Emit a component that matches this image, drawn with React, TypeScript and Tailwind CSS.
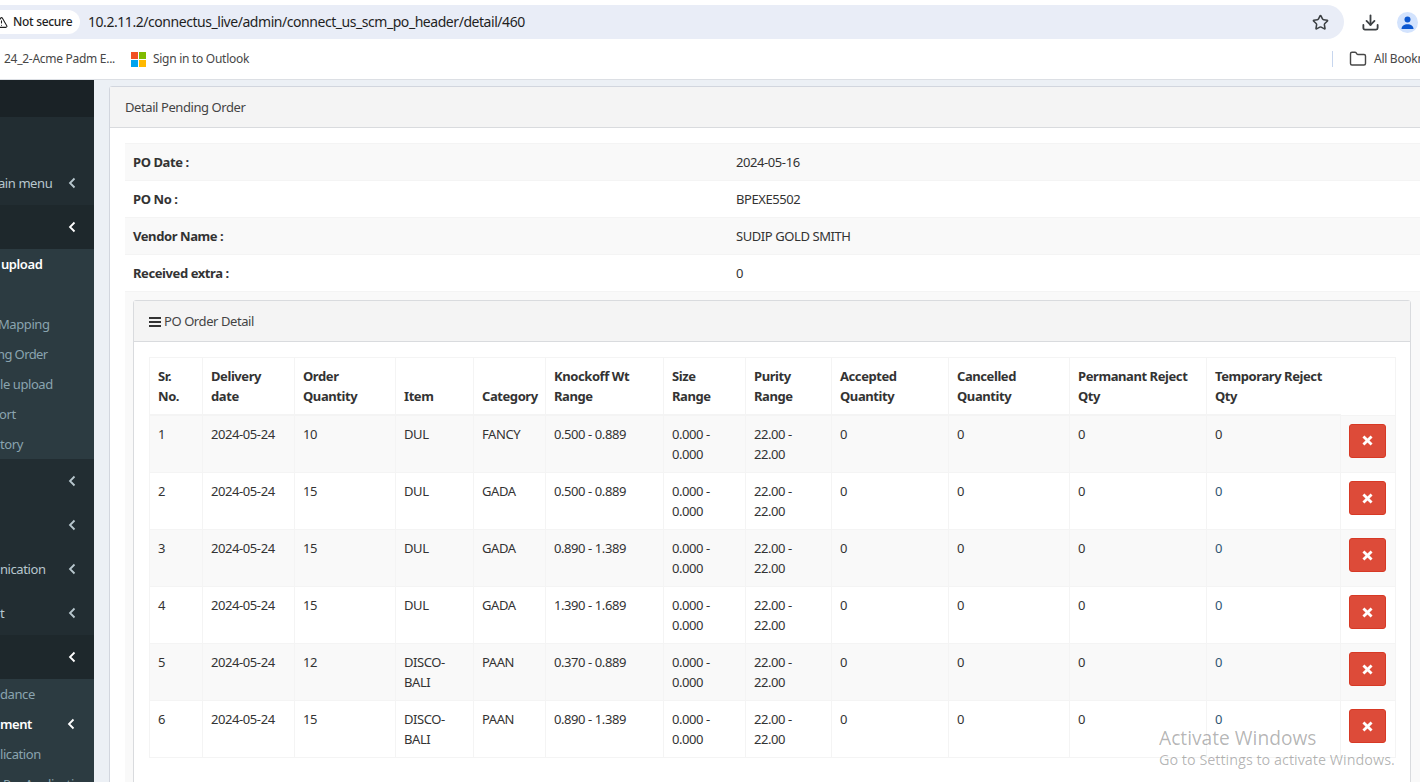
import React from "react";
import { Star, Download, Folder, TriangleAlert } from "lucide-react";

const Chevron = ({ color = "#b8c7ce" }: { color?: string }) => (
  <svg width="8" height="12" viewBox="0 0 8 12" fill="none" stroke={color} strokeWidth="1.8">
    <path d="M6.5 1.5 L2 6 L6.5 10.5" />
  </svg>
);

const Cross = () => (
  <svg width="11" height="11" viewBox="0 0 10 10" fill="#fff">
    <path d="M2.2.4 5 3.2 7.8.4 9.6 2.2 6.8 5l2.8 2.8-1.8 1.8L5 6.8 2.2 9.6.4 7.8 3.2 5 .4 2.2z" />
  </svg>
);

const MainItem = ({ text = "", active = false, shift = "" }: { text?: string; active?: boolean; shift?: string }) => (
  <div className={`h-[44px] flex items-center justify-between pr-[18px] text-[13px] ${active ? "bg-[#1e282c]" : ""} text-[#b8c7ce]`}>
    <span className={`whitespace-nowrap pt-[2px] ${shift}`}>{text}</span>
    <Chevron color={active ? "#ffffff" : "#b8c7ce"} />
  </div>
);

const SubItem = ({ text = "", white = false, chevron = false, shift = "" }: { text?: string; white?: boolean; chevron?: boolean; shift?: string }) => (
  <div className={`h-[30px] flex items-center justify-between pr-[19px] text-[13px] ${white ? "text-white font-semibold" : "text-[#8aa4af]"}`}>
    <span className={`whitespace-nowrap pt-[2px] ${shift}`}>{text}</span>
    {chevron && <Chevron color="#ffffff" />}
  </div>
);

const info = [
  ["PO Date :", "2024-05-16"],
  ["PO No :", "BPEXE5502"],
  ["Vendor Name :", "SUDIP GOLD SMITH"],
  ["Received extra :", "0"],
];

const heads = [
  ["Sr.", "No."],
  ["Delivery", "date"],
  ["Order", "Quantity"],
  ["Item"],
  ["Category"],
  ["Knockoff Wt", "Range"],
  ["Size", "Range"],
  ["Purity", "Range"],
  ["Accepted", "Quantity"],
  ["Cancelled", "Quantity"],
  ["Permanant Reject", "Qty"],
  ["Temporary Reject", "Qty"],
];
const rows = [
  ["1", "10", "DUL", "FANCY", "0.500 - 0.889"],
  ["2", "15", "DUL", "GADA", "0.500 - 0.889"],
  ["3", "15", "DUL", "GADA", "0.890 - 1.389"],
  ["4", "15", "DUL", "GADA", "1.390 - 1.689"],
  ["5", "12", "DISCO-BALI", "PAAN", "0.370 - 0.889"],
  ["6", "15", "DISCO-BALI", "PAAN", "0.890 - 1.389"],
];

const td = "border border-[#f4f4f4] px-[8px] pt-[8px] pb-[8px] align-top leading-[20px]";

export default function App() {
  return (
    <div className="relative w-[1420px] h-[782px] overflow-hidden flex flex-col bg-white text-[#333] font-['Noto_Sans',sans-serif] text-[13px] tracking-[-0.42px]">
      {/* browser chrome */}
      <div className="h-[80px] shrink-0 bg-white border-b border-[#dcdfe4] pt-[5px]">
        <div className="h-[34px] flex items-center">
          <div className="w-[1344px] h-[34px] bg-[#e9edf7] rounded-r-[17px] flex items-center">
            <div className="h-[24px] w-[80px] bg-white rounded-r-[12px] flex items-center text-[12px] text-[#1f1f1f] overflow-hidden tracking-[-0.3px]">
              <TriangleAlert size={13} strokeWidth={2} className="ml-[-5px] mr-[5px] shrink-0" />
              <span className="font-medium whitespace-nowrap">Not secure</span>
            </div>
            <span className="ml-[8px] pb-[2px] text-[14px] text-[#1f1f1f] whitespace-nowrap tracking-[-0.45px]">10.2.11.2/connectus_live/admin/connect_us_scm_po_header/detail/460</span>
            <Star size={17} strokeWidth={2.2} className="ml-auto mr-[15px] text-[#3c4043]" />
          </div>
          <Download size={19} strokeWidth={2.3} className="ml-[17px] text-[#3c4043]" />
          <div className="ml-[17px] w-[21px] h-[21px] rounded-full bg-[#d3e3fd] flex items-center justify-center shrink-0">
            <svg width="13" height="13" viewBox="0 0 13 13" fill="#0b57d0">
              <circle cx="6.5" cy="3.5" r="3" />
              <path d="M0.5 13c0-3 2.7-4.8 6-4.8s6 1.8 6 4.8z" />
            </svg>
          </div>
        </div>
        <div className="h-[40px] flex items-center text-[12px] text-[#474747] tracking-[-0.28px]">
          <span className="ml-[4px] w-[127px] whitespace-nowrap">24_2-Acme Padm E...</span>
          <svg width="15" height="15" viewBox="0 0 15 15" className="shrink-0">
            <rect width="7" height="7" fill="#f25022" />
            <rect x="8" width="7" height="7" fill="#7fba00" />
            <rect y="8" width="7" height="7" fill="#00a4ef" />
            <rect x="8" y="8" width="7" height="7" fill="#ffb900" />
          </svg>
          <span className="ml-[7px] whitespace-nowrap">Sign in to Outlook</span>
          <div className="ml-auto w-px h-[16px] bg-[#c7d6ee]" />
          <Folder size={18} strokeWidth={1.9} className="ml-[16px] text-[#474747] shrink-0" />
          <span className="ml-[7px] w-[46px] whitespace-nowrap">All Bookmarks</span>
        </div>
      </div>

      <div className="flex-1 min-h-0 flex bg-[#ecf0f5]">
        {/* sidebar */}
        <aside className="w-[94px] shrink-0 overflow-hidden bg-[#222d32]">
          <div className="h-[37px] bg-[#1a2226]" />
          <div className="h-[44px]" />
          <MainItem text="ain menu" shift="ml-[-2px]" />
          <MainItem active />
          <div className="bg-[#2c3b41]">
            <SubItem text="upload" white shift="ml-[1px]" />
            <SubItem />
            <SubItem text="Mapping" shift="ml-[-2px]" />
            <SubItem text="ng Order" shift="ml-[-3px] tracking-[-0.6px]" />
            <SubItem text="le upload" />
            <SubItem text="ort" shift="ml-[-1px]" />
            <SubItem text="tory" />
          </div>
          <MainItem />
          <MainItem />
          <MainItem text="nication" />
          <MainItem text="t" />
          <MainItem active />
          <div className="bg-[#2c3b41]">
            <SubItem text="dance" />
            <SubItem text="ment" white chevron />
            <SubItem text="lication" />
            <SubItem text="Pre Application" shift="ml-[3px]" />
          </div>
        </aside>

        {/* content */}
        <main className="flex-1 min-w-0 overflow-hidden pl-[15px] pt-[6px]">
          <div className="w-[1401px] bg-white border border-[#d2d6de] rounded-[3px]">
            <div className="h-[41px] bg-[#f4f4f4] border-b border-[#d9dbde] flex items-center pl-[15px] pt-[2px] text-[#444]">Detail Pending Order</div>
            <div className="p-[15px]">
              <table className="w-full border-collapse table-fixed">
                <colgroup>
                  <col className="w-[603px]" />
                  <col />
                </colgroup>
                <tbody>
                  {info.map(([k, v], i) => (
                    <tr key={k} className={i % 2 === 0 ? "bg-[#f9f9f9]" : ""}>
                      <td className="h-[37px] px-[8px] pt-[1px] border-t border-[#f4f4f4] font-bold">{k}</td>
                      <td className="px-[8px] pt-[1px] border-t border-[#f4f4f4]">{v}</td>
                    </tr>
                  ))}
                  <tr className="bg-[#f9f9f9]">
                    <td colSpan={2} className="p-[8px] border-t border-[#f4f4f4]">
                      <div className="w-[1278px] bg-white border border-[#d9dbde] rounded-[3px] pb-[40px]">
                        <div className="h-[41px] bg-[#f4f4f4] border-b border-[#d9dbde] flex items-center pl-[15px] pt-[2px] text-[#444]">
                          <svg width="12" height="10" viewBox="0 0 12 10" fill="#333" className="mr-[3px]">
                            <rect width="12" height="2" />
                            <rect y="4" width="12" height="2" />
                            <rect y="8" width="12" height="2" />
                          </svg>
                          PO Order Detail
                        </div>
                        <div className="p-[15px]">
                          <table className="w-[1246px] border-collapse table-fixed">
                            <colgroup>
                              <col className="w-[53px]" />
                              <col className="w-[92px]" />
                              <col className="w-[101px]" />
                              <col className="w-[78px]" />
                              <col className="w-[72px]" />
                              <col className="w-[118px]" />
                              <col className="w-[82px]" />
                              <col className="w-[86px]" />
                              <col className="w-[117px]" />
                              <col className="w-[121px]" />
                              <col className="w-[137px]" />
                              <col className="w-[134px]" />
                              <col className="w-[55px]" />
                            </colgroup>
                            <thead>
                              <tr>
                                {heads.map((h, i) => (
                                  <th key={h.join()} className={`border border-[#f4f4f4] border-b-2 px-[8px] pt-[8px] pb-[8px] align-bottom text-left font-bold leading-[20px] ${i === 11 ? "border-r-0" : ""}`}>
                                    {h.map((l) => (
                                      <div key={l} className="whitespace-nowrap">{l}</div>
                                    ))}
                                  </th>
                                ))}
                                <th className="border-t border-r border-[#f4f4f4]" />
                              </tr>
                            </thead>
                            <tbody>
                              {rows.map((r, i) => (
                                <tr key={r[0]} className={i % 2 === 0 ? "bg-[#f9f9f9]" : ""}>
                                  <td className={td}>{r[0]}</td>
                                  <td className={td}>2024-05-24</td>
                                  <td className={td}>{r[1]}</td>
                                  <td className={td}>
                                    {r[2] === "DUL" ? "DUL" : (
                                      <>
                                        <div>DISCO-</div>
                                        <div>BALI</div>
                                      </>
                                    )}
                                  </td>
                                  <td className={td}>{r[3]}</td>
                                  <td className={td}>{r[4]}</td>
                                  <td className={td}>
                                    <div>0.000 -</div>
                                    <div>0.000</div>
                                  </td>
                                  <td className={td}>
                                    <div>22.00 -</div>
                                    <div>22.00</div>
                                  </td>
                                  <td className={td}>0</td>
                                  <td className={td}>0</td>
                                  <td className={td}>0</td>
                                  <td className={`${td} ${i > 0 ? "text-[#2f5573]" : ""}`}>0</td>
                                  <td className="border border-[#f4f4f4] px-[8px] pt-[8px] pb-0 align-top">
                                    <button className="w-[37px] h-[34px] bg-[#dd4b39] border border-[#d73925] rounded-[3px] flex items-center justify-center">
                                      <Cross />
                                    </button>
                                  </td>
                                </tr>
                              ))}
                            </tbody>
                          </table>
                        </div>
                      </div>
                    </td>
                  </tr>
                </tbody>
              </table>
            </div>
          </div>
        </main>
      </div>

      <div className="absolute left-[1159px] top-[726px] text-[#000]/30 tracking-normal pointer-events-none font-['Open_Sans',sans-serif]">
        <div className="text-[19.2px] leading-[24px]">Activate Windows</div>
        <div className="text-[14.4px] leading-[20px] whitespace-nowrap">Go to Settings to activate Windows.</div>
      </div>
    </div>
  );
}
